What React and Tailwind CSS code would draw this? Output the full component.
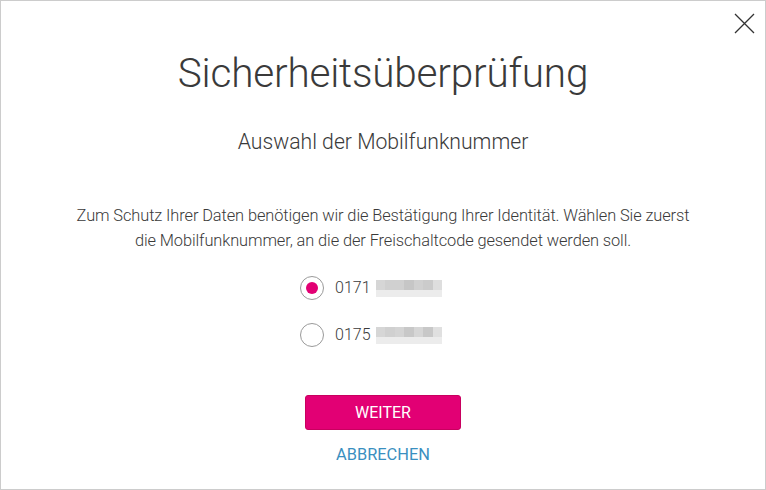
const top1 = ["#d6d6d6", "#d0d0d0", "#d0d0d0", "#c6c6c6", "#d0d0d0", "#cbcbcb", "#dedede"];
const top2 = ["#d6d6d6", "#d0d0d0", "#d4d4d4", "#c8c8c8", "#d6d6d6", "#c8c8c8", "#e0e0e0"];

function Blur({ cells }) {
  return (
    <div className="flex flex-col ml-[5px]">
      <div className="flex">
        {cells.map((c, i) => (
          <div key={i} className="w-[9.5px] h-[10px]" style={{ backgroundColor: c }} />
        ))}
      </div>
      <div className="flex">
        {cells.map((_, i) => (
          <div key={i} className="w-[9.5px] h-[7px] bg-[#ececec]" />
        ))}
      </div>
    </div>
  );
}

function Radio({ checked, number, cells }) {
  return (
    <label className="flex items-center">
      <span className="w-[24px] h-[24px] shrink-0 rounded-full border border-[#9a9a9a] flex items-center justify-center bg-white">
        {checked && <span className="w-[12px] h-[12px] rounded-full bg-[#e20074]" />}
      </span>
      <span className="ml-[11px] text-[16px] font-light text-[#3a3a3a]">{number}</span>
      <Blur cells={cells} />
    </label>
  );
}

export default function App() {
  return (
    <div
      className="w-[766px] h-[490px] bg-white border border-[#cccccc] relative flex flex-col items-center"
      style={{ fontFamily: "Roboto, 'Liberation Sans', sans-serif" }}
    >
      {/* Close */}
      <button className="absolute right-[10px] top-[12px] w-[21px] h-[21px]">
        <svg viewBox="0 0 21 21" className="w-[21px] h-[21px]">
          <path d="M1 1 L20 20 M20 1 L1 20" stroke="#333" strokeWidth="1.3" fill="none" />
        </svg>
      </button>

      <h1 className="mt-[46px] text-[40.5px] font-light text-[#3a3a3a] leading-[52px] tracking-[-0.2px]">
        Sicherheitsüberprüfung
      </h1>
      <h2 className="mt-[30px] text-[21.2px] font-light text-[#3a3a3a] leading-[26px]">
        Auswahl der Mobilfunknummer
      </h2>

      <p className="mt-[48px] text-[16.4px] font-light text-[#3a3a3a] leading-[25px] text-center tracking-[-0.1px]">
        Zum Schutz Ihrer Daten benötigen wir die Bestätigung Ihrer Identität. Wählen Sie zuerst
        <br />
        die Mobilfunknummer, an die der Freischaltcode gesendet werden soll.
      </p>

      <div className="mt-[23px] flex flex-col gap-[23px] mr-[24px]">
        <Radio checked number="0171" cells={top1} />
        <Radio number="0175" cells={top2} />
      </div>

      <button className="mt-[48px] w-[156px] h-[35px] rounded-[3px] bg-[#e20074] border border-[#c8005f] text-white text-[16px] leading-none">
        WEITER
      </button>
      <a href="#" className="mt-[15px] text-[16.4px] text-[#3a8fc0] leading-[20px]">
        ABBRECHEN
      </a>
    </div>
  );
}
